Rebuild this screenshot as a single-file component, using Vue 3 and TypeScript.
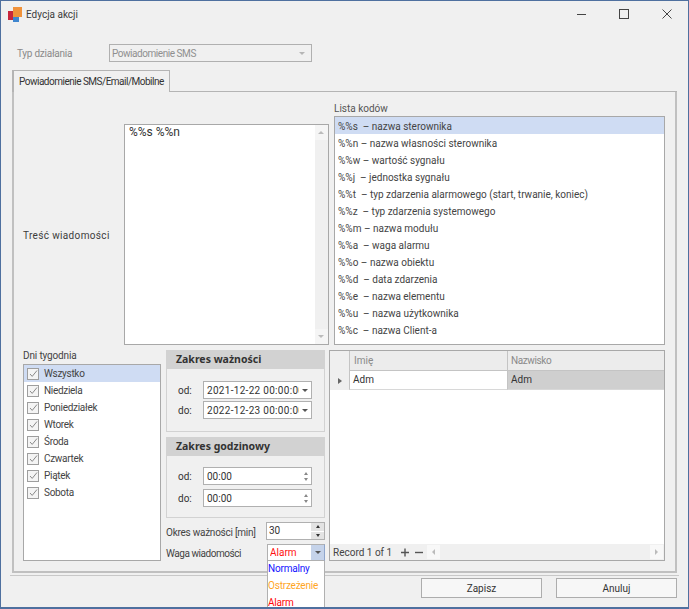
<script setup lang="ts">
const codes: string[] = [
  '%%s  – nazwa sterownika',
  '%%n – nazwa własności sterownika',
  '%%w – wartość sygnału',
  '%%j  – jednostka sygnału',
  '%%t  – typ zdarzenia alarmowego (start, trwanie, koniec)',
  '%%z  – typ zdarzenia systemowego',
  '%%m – nazwa modułu',
  '%%a  – waga alarmu',
  '%%o – nazwa obiektu',
  '%%d  – data zdarzenia',
  '%%e  – nazwa elementu',
  '%%u  – nazwa użytkownika',
  '%%c  – nazwa Client-a',
]
const days: string[] = ['Wszystko', 'Niedziela', 'Poniedziałek', 'Wtorek', 'Środa', 'Czwartek', 'Piątek', 'Sobota']
const weights = [
  { label: 'Normalny', color: '#1414ff' },
  { label: 'Ostrzeżenie', color: '#ffa51f' },
  { label: 'Alarm', color: '#ff0a0a' },
]
</script>

<template>
  <div class="window">
    <header class="titlebar">
      <svg class="logo" width="15" height="16" viewBox="0 0 15 16">
        <rect x="0" y="4" width="5" height="9" fill="#c8263c" />
        <rect x="5" y="0" width="9" height="10" fill="#f0923a" />
        <rect x="5" y="10" width="6" height="5" fill="#3f86cf" />
      </svg>
      <span class="title">Edycja akcji</span>
      <div class="controls">
        <svg width="12" height="12" viewBox="0 0 12 12"><path d="M2 6.5h9" stroke="#444" fill="none" /></svg>
        <svg width="12" height="12" viewBox="0 0 12 12"><rect x="1.5" y="1.5" width="9" height="9" stroke="#444" fill="none" /></svg>
        <svg width="12" height="12" viewBox="0 0 12 12"><path d="M1.5 1.5l9 9M10.5 1.5l-9 9" stroke="#444" fill="none" /></svg>
      </div>
    </header>

    <div class="type-row">
      <span class="type-label">Typ działania</span>
      <div class="type-combo">
        <span>Powiadomienie SMS</span>
        <i class="caret caret-light"></i>
      </div>
    </div>

    <div class="tabstrip"><div class="tab">Powiadomienie SMS/Email/Mobilne</div><div class="tab-rest"></div></div>

    <section class="panel">
      <div class="top">
        <div class="msg-label">Treść wiadomości</div>
        <div class="message">
          <div class="message-text">%%s %%n</div>
          <div class="scrollbar">
            <span class="sb-up"></span>
            <span class="sb-down"></span>
          </div>
        </div>
        <div class="codes-col">
          <div class="codes-label">Lista kodów</div>
          <ul class="codes">
            <li v-for="(c, i) in codes" :key="c" :class="{ sel: i === 0 }">{{ c }}</li>
          </ul>
        </div>
      </div>

      <div class="bottom">
        <div class="days-col">
          <div class="days-label">Dni tygodnia</div>
          <ul class="days">
            <li v-for="(d, i) in days" :key="d" :class="{ sel: i === 0 }">
              <span class="check">
                <svg width="9" height="9" viewBox="0 0 9 9"><path d="M1 5l2.2 2.4L8 1.5" stroke="#8a8a8a" fill="none" /></svg>
              </span>
              {{ d }}
            </li>
          </ul>
        </div>

        <div class="mid-col">
          <div class="group">
            <div class="group-head">Zakres ważności</div>
            <div class="group-body">
              <div class="field">
                <label>od:</label>
                <div class="input"><span class="clip date">2021-12-22 00:00:00</span><i class="caret"></i></div>
              </div>
              <div class="field">
                <label>do:</label>
                <div class="input"><span class="clip date">2022-12-23 00:00:00</span><i class="caret"></i></div>
              </div>
            </div>
          </div>
          <div class="group group-2">
            <div class="group-head">Zakres godzinowy</div>
            <div class="group-body">
              <div class="field">
                <label>od:</label>
                <div class="input"><span class="clip">00:00</span><span class="spin"><i class="up"></i><i class="down"></i></span></div>
              </div>
              <div class="field">
                <label>do:</label>
                <div class="input"><span class="clip">00:00</span><span class="spin"><i class="up"></i><i class="down"></i></span></div>
              </div>
            </div>
          </div>
          <div class="inline inline-1">
            <span class="inline-label okres">Okres ważności [min]</span>
            <div class="small-input">
              <span class="clip">30</span>
              <span class="spin-btns"><b><i class="up dark"></i></b><b><i class="down dark"></i></b></span>
            </div>
          </div>
          <div class="inline inline-2">
            <span class="inline-label waga">Waga wiadomości</span>
            <div class="weight">
              <span class="clip alarm">Alarm</span>
              <span class="weight-btn"><i class="caret"></i></span>
            </div>
            <ul class="dropdown">
              <li v-for="w in weights" :key="w.label" :style="{ color: w.color }">{{ w.label }}</li>
            </ul>
          </div>
        </div>

        <div class="grid">
          <div class="grid-head">
            <div class="indicator"></div>
            <div class="col col-a">Imię</div>
            <div class="col col-b nazwisko">Nazwisko</div>
          </div>
          <div class="grid-row">
            <div class="indicator row-ind"><i class="arrow"></i></div>
            <div class="cell col-a">Adm</div>
            <div class="cell cell-sel col-b">Adm</div>
          </div>
          <div class="grid-space"></div>
          <div class="grid-foot">
            <span class="record">Record 1 of 1</span>
            <span class="pm">
              <svg width="8" height="9" viewBox="0 0 8 9"><path d="M0 4.5h8M4 .5v8" stroke="#555" stroke-width="1.4" fill="none" /></svg>
              <svg width="8" height="9" viewBox="0 0 8 9"><path d="M0 4.5h8" stroke="#555" stroke-width="1.4" fill="none" /></svg>
            </span>
            <div class="hscroll">
              <span class="hbtn"><i class="tri-l"></i></span>
              <span class="hbtn"><i class="tri-r"></i></span>
            </div>
          </div>
        </div>
      </div>
    </section>

    <footer class="actions">
      <button class="btn">Zapisz</button>
      <button class="btn">Anuluj</button>
    </footer>
  </div>
</template>

<style>
html, body { margin: 0; padding: 0; background: #f0f0f0; }
</style>

<style scoped>
* { box-sizing: border-box; }
ul { list-style: none; margin: 0; padding: 0; }
i { display: block; }
.window {
  position: relative;
  width: 689px;
  height: 609px;
  overflow: hidden;
  background: #f0f0f0;
  border: 1px solid #4f709f;
  border-bottom-width: 2px;
  font-family: Roboto, "Liberation Sans", sans-serif;
  font-size: 10px;
  color: #3c3c3c;
}
.titlebar {
  display: flex;
  align-items: center;
  height: 27px;
  padding-left: 7px;
}
.logo { margin-right: 3px; }
.title { color: #3c3c3c; }
.controls {
  margin-left: auto;
  display: flex;
  gap: 31px;
  padding-right: 15px;
  padding-bottom: 1px;
}
.type-row {
  display: flex;
  align-items: center;
  height: 18px;
  margin-top: 16px;
  padding-left: 16px;
}
.type-label { width: 92px; color: #8a8a8a; letter-spacing: -0.25px; }
.type-combo {
  width: 203px;
  height: 18px;
  border: 1px solid #b0b0b0;
  display: flex;
  align-items: center;
  justify-content: space-between;
  padding: 0 6px 0 2px;
  color: #8f8f8f;
  letter-spacing: -0.45px;
}
.caret {
  width: 0;
  height: 0;
  border-left: 3px solid transparent;
  border-right: 3px solid transparent;
  border-top: 3px solid #555;
}
.caret-light { border-top-color: #b5b5b5; }
.tabstrip {
  display: flex;
  height: 22px;
  margin-top: 8px;
  padding-left: 11px;
  padding-right: 11px;
}
.tab {
  width: 158px;
  height: 22px;
  border: 1px solid #b4b4b4;
  border-bottom: none;
  border-left-width: 2px;
  background: #f0f0f0;
  padding: 5px 0 0 5px;
  color: #333;
  white-space: nowrap;
  letter-spacing: -0.5px;
  position: relative;
  z-index: 1;
}
.tab-rest { flex: 1; border-bottom: 1px solid #b4b4b4; }
.panel {
  margin: -1px 11px 0;
  height: 482px;
  border: 2px solid #c0c0c0;
  border-top: 1px solid #b4b4b4;
  padding: 10px 10px 9px 9px;
}
.top { display: flex; height: 243px; }
.msg-label { width: 101px; align-self: center; margin-top: 24px; letter-spacing: 0.35px; white-space: nowrap; }
.message {
  width: 205px;
  margin-top: 22px;
  border: 1px solid #a8a8a8;
  background: #fff;
  display: flex;
}
.message-text { flex: 1; padding: 0 4px; color: #333; font-size: 12px; }
.scrollbar {
  width: 13px;
  background: #f0f0f0;
  display: flex;
  flex-direction: column;
  justify-content: space-between;
}
.sb-up, .sb-down { display: block; height: 15px; position: relative; background: #f5f5f5; }
.sb-up::after, .sb-down::after {
  content: "";
  position: absolute;
  left: 3px;
  top: 6px;
  border-left: 3px solid transparent;
  border-right: 3px solid transparent;
}
.sb-up::after { border-bottom: 3px solid #bbb; }
.sb-down::after { border-top: 3px solid #bbb; }
.codes-col { margin-left: 5px; width: 331px; display: flex; flex-direction: column; }
.codes-label { height: 14px; line-height: 14px; color: #555; }
.codes {
  flex: 1;
  border: 1px solid #a8a8a8;
  background: #fff;
}
.codes li { height: 17px; line-height: 20px; padding-left: 3px; color: #444; white-space: pre; }
.codes li.sel, .days li.sel { background: #cfdcf3; }
.bottom { display: flex; margin-top: 5px; height: 211px; }
.days-col { width: 143px; display: flex; flex-direction: column; }
.days-label { height: 14px; line-height: 12px; color: #444; letter-spacing: -0.15px; }
.days {
  flex: 1;
  width: 138px;
  border: 1px solid #a8a8a8;
  background: #fff;
}
.days li {
  height: 17px;
  display: flex;
  align-items: center;
  gap: 5px;
  padding-left: 3px;
  color: #444;
  letter-spacing: -0.3px;
}
.check {
  width: 12px;
  height: 12px;
  border: 1px solid #9e9e9e;
  background: #f4f4f4;
  display: flex;
  align-items: center;
  justify-content: center;
}
.mid-col { width: 159px; position: relative; }
.group { height: 82px; background: #e8e8e8; border: 1px solid #d2d2d2; }
.group-2 { margin-top: 5px; height: 81px; }
.group-head {
  height: 19px;
  line-height: 18px;
  padding-left: 10px;
  background: #d2d2d2;
  font-family: "Noto Sans", sans-serif;
  font-weight: 700;
  font-size: 10.5px;
  color: #333;
  margin: -1px -1px 0;
}
.group-body { padding: 12px 12px 0 11px; background: #f0f0f0; height: 62px; }
.group-2 .group-body { padding-top: 11px; height: 61px; }
.group-2 .field { margin-bottom: 4px; }
.field { display: flex; align-items: center; height: 18px; margin-bottom: 2px; }
.field label { width: 25px; color: #333; }
.input {
  flex: 1;
  height: 18px;
  width: 109px;
  background: #fff;
  border: 1px solid #b0b0b0;
  display: flex;
  align-items: center;
  padding: 0 3px 0 3px;
  color: #333;
}
.clip { flex: 1; overflow: hidden; white-space: nowrap; }
.date { letter-spacing: 0.3px; }
.input .caret { margin-left: 3px; }
.spin { display: flex; flex-direction: column; gap: 3px; }
.up, .down {
  width: 0;
  height: 0;
  border-left: 2.5px solid transparent;
  border-right: 2.5px solid transparent;
}
.up { border-bottom: 3px solid #888; }
.down { border-top: 3px solid #888; }
.dark.up { border-bottom-color: #333; }
.dark.down { border-top-color: #333; }
.inline { display: flex; align-items: center; justify-content: space-between; height: 18px; }
.inline-1 { margin-top: 4px; }
.inline-2 { margin-top: 4px; height: 17px; position: relative; }
.inline-label { color: #444; white-space: nowrap; padding-top: 2px; }
.okres { letter-spacing: -0.25px; }
.waga { letter-spacing: -0.45px; }
.small-input {
  width: 59px;
  height: 18px;
  background: #fff;
  border: 1px solid #b0b0b0;
  display: flex;
  align-items: stretch;
  padding-left: 2px;
  line-height: 16px;
  color: #333;
}
.spin-btns { width: 13px; display: flex; flex-direction: column; gap: 1px; }
.spin-btns b { flex: 1; background: #e3e3e3; display: flex; align-items: center; justify-content: center; }
.weight {
  width: 58px;
  height: 17px;
  background: #fff;
  border: 1px solid #b0b0b0;
  border-right-color: #8fa6cc;
  display: flex;
  align-items: stretch;
  padding-left: 2px;
  line-height: 15px;
}
.alarm { color: #ff1010; }
.weight-btn {
  width: 13px;
  background: #c5d3ea;
  display: flex;
  align-items: center;
  justify-content: center;
}
.dropdown {
  position: absolute;
  right: 0;
  top: 17px;
  width: 58px;
  height: 52px;
  background: #fff;
  border-left: 1px solid #b0b0b0;
  border-right: 1px solid #b0b0b0;
  z-index: 2;
  letter-spacing: -0.2px;
}
.dropdown li { height: 17px; line-height: 16px; white-space: nowrap; }
.grid {
  margin-left: 4px;
  width: 336px;
  height: 211px;
  border: 1px solid #a8a8a8;
  background: #fff;
  display: flex;
  flex-direction: column;
}
.grid-head { display: flex; height: 20px; background: #ececec; color: #8a8a8a; }
.grid-row { display: flex; height: 19px; color: #333; }
.indicator { width: 19px; background: #efefef; display: flex; align-items: center; justify-content: center; }
.row-ind { border-bottom: none; }
.col { border-left: 1px solid #c4c4c4; border-bottom: 1px solid #c4c4c4; padding-left: 4px; line-height: 19px; }
.nazwisko { padding-left: 3px; letter-spacing: -0.4px; }
.col-a { width: 158px; }
.col-b { flex: 1; }
.cell { padding-left: 3px; line-height: 18px; border-left: 1px solid #c4c4c4; border-bottom: 1px solid #d8d8d8; }
.cell-sel { background: #cfcfcf; }
.arrow {
  border-top: 3px solid transparent;
  border-bottom: 3px solid transparent;
  border-left: 4px solid #666;
}
.grid-space { flex: 1; }
.grid-foot {
  height: 16px;
  display: flex;
  align-items: center;
  background: #f0f0f0;
  padding-left: 3px;
  color: #444;
}
.record { width: 68px; white-space: nowrap; }
.pm { display: flex; gap: 6px; width: 26px; }
.hscroll {
  flex: 1;
  display: flex;
  justify-content: space-between;
  padding-right: 1px;
  align-items: center;
}
.hbtn { width: 13px; height: 14px; background: #f8f8f8; display: flex; align-items: center; justify-content: center; }
.tri-l { border-top: 3px solid transparent; border-bottom: 3px solid transparent; border-right: 3px solid #bbb; }
.tri-r { border-top: 3px solid transparent; border-bottom: 3px solid transparent; border-left: 3px solid #bbb; }
.actions {
  display: flex;
  justify-content: flex-end;
  gap: 14px;
  margin: 2px 9px 0;
  padding: 2px 2px 0 0;
  border-top: 1px solid #c8c8c8;
}
.btn {
  width: 121px;
  height: 20px;
  background: #f7f7f7;
  border: 1px solid #adadad;
  font: inherit;
  color: #333;
  padding: 0;
}
</style>
